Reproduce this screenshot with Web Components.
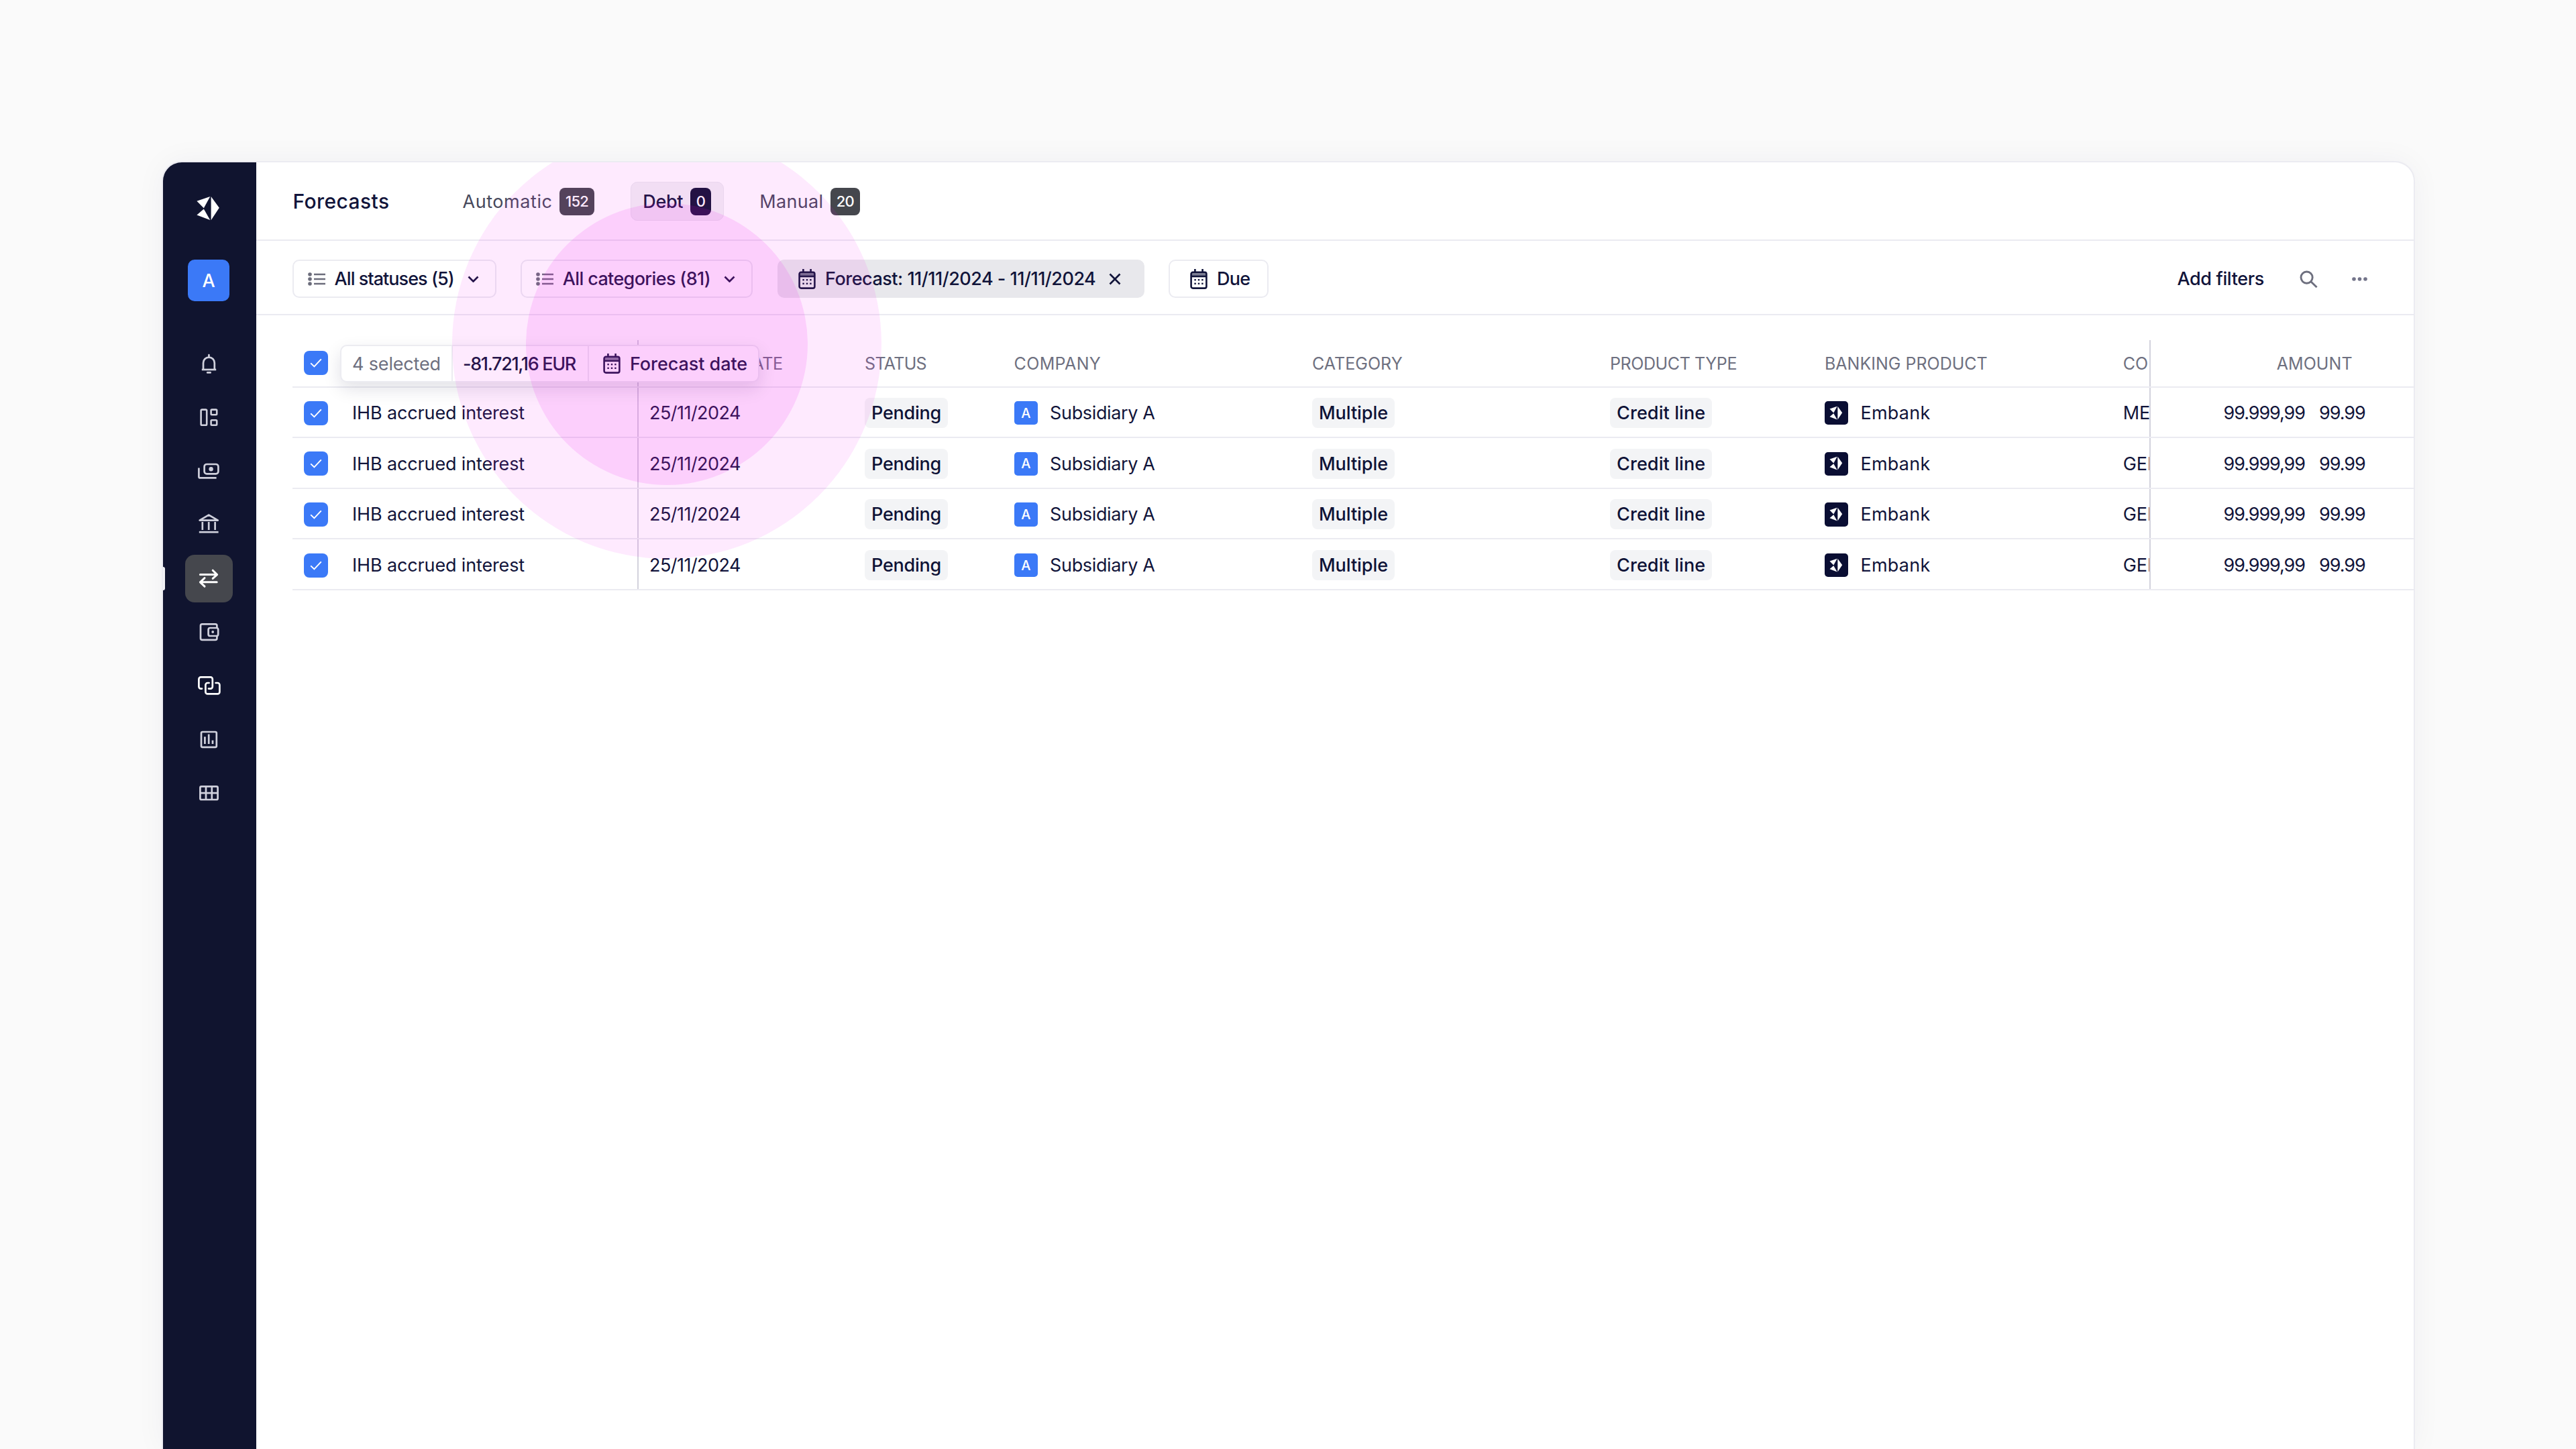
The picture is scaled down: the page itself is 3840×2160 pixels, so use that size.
<!doctype html>
<html lang="en"><head><meta charset="utf-8"><title>Forecasts</title>
<style>
html,body{margin:0;height:100%;background:#fafafa;overflow:hidden}
body{font-family:Inter,"Liberation Sans",sans-serif;color:#11143a;padding:242px 0 0 242.5px;box-sizing:border-box}
</style></head>
<body>
<x-app>
  <x-sidebar slot="side">
    <x-nav icon="bell"></x-nav>
    <x-nav icon="board"></x-nav>
    <x-nav icon="money"></x-nav>
    <x-nav icon="bank"></x-nav>
    <x-nav icon="swap" active></x-nav>
    <x-nav icon="wallet"></x-nav>
    <x-nav icon="layers" bright></x-nav>
    <x-nav icon="chart"></x-nav>
    <x-nav icon="table"></x-nav>
  </x-sidebar>
  <x-topbar slot="main" heading="Forecasts">
    <x-tab count="152" style="--ls:.56px">Automatic</x-tab>
    <x-tab count="0" active style="--ls:-.3px">Debt</x-tab>
    <x-tab count="20" style="--ls:.3px">Manual</x-tab>
  </x-topbar>
  <x-filterbar slot="main">
    <x-filter icon="list" chevron style="--ls:-.95px">All statuses (5)</x-filter>
    <x-filter icon="list" chevron style="--ls:-.64px">All categories (81)</x-filter>
    <x-filter icon="calendar" close filled style="--ls:-.5px">Forecast: 11/11/2024 - 11/11/2024</x-filter>
    <x-filter icon="calendar" style="--ls:-.7px">Due</x-filter>
    <x-tools slot="end"></x-tools>
  </x-filterbar>
  <x-table slot="main"></x-table>
  <x-spotlight slot="over"></x-spotlight>
</x-app>
<script>
const ICONS={
logo:[64,64,`<g fill="currentColor" stroke="none"><path d="M34.6 14 46.8 30.8 34.6 49.2Z"/><path d="M13.4 20.7 33.2 14 23.8 31.2Z"/><path d="M23.8 32.4 33.2 49 13.4 41.6Z"/></g>`],
bell:[64,64,`<g fill="none" stroke="currentColor" stroke-width="2.7" stroke-linecap="round"><path d="M23 40V31a8.4 8.4 0 0 1 16.8 0v9"/><path d="M31.4 19.2v3"/><path d="M20.8 41h21.4" stroke-linecap="butt"/><path d="M29.2 45.4h4.4"/></g>`],
board:[64,64,`<g fill="none" stroke="currentColor" stroke-width="2.6"><rect x="19.6" y="20.6" width="8.6" height="23.2" rx="1.6"/><rect x="34.6" y="20.6" width="8.6" height="7.6" rx="1.2"/><rect x="34.6" y="36.2" width="8.6" height="7.6" rx="1.2"/></g>`],
money:[64,64,`<g fill="none" stroke="currentColor" stroke-width="2.7"><rect x="24.6" y="22" width="20.8" height="14.4" rx="3.6"/><path d="M16.4 27.6V40.4a2 2 0 0 0 2 2H42.6"/></g><circle cx="34.6" cy="29.2" r="3.2" fill="currentColor"/>`],
bank:[64,64,`<g fill="none" stroke="currentColor" stroke-width="2.7"><path d="M17.6 25.6 31.2 17.6 44.8 25.6Z" stroke-linejoin="round"/><path d="M21.8 28V40M31.2 28V40M40.6 28V40"/><path d="M16.8 43.2H45.6"/></g>`],
swap:[64,64,`<g fill="none" stroke="currentColor" stroke-width="3" stroke-linecap="round" stroke-linejoin="round"><path d="M18.4 26.6H43.2M37.2 20.2 43.6 26.6 37.2 32.4"/><path d="M43.2 37.8H18.6M25 31.6 18.4 37.8 25 44.2"/></g>`],
wallet:[64,64,`<g fill="none" stroke="currentColor" stroke-width="2.7"><rect x="19" y="20.3" width="24.4" height="23.6" rx="2.4"/></g><rect x="30.6" y="26" width="14.6" height="12" rx="2.6" fill="#10142f" stroke="currentColor" stroke-width="2.7"/><circle cx="37.2" cy="32" r="1.9" fill="currentColor"/>`],
layers:[64,64,`<g fill="none" stroke="currentColor" stroke-width="2.7" stroke-linecap="round"><path d="M21 36.6h-1.6a3 3 0 0 1-3-3V22.4a3 3 0 0 1 3-3h14.4a3 3 0 0 1 3 3v11.2a3 3 0 0 1-3 3H31"/><path d="M31.6 28h-2.2a3 3 0 0 0-3 3v10.4a3 3 0 0 0 3 3h15a3 3 0 0 0 3-3V31a3 3 0 0 0-3-3h-2.8"/></g>`],
chart:[64,64,`<g fill="none" stroke="currentColor" stroke-width="2.7"><rect x="20" y="21" width="22.8" height="22.8" rx="1.8"/><path d="M25.4 28.2V39M31.2 24.6V39"/></g><path d="M37 33.6V39" stroke="currentColor" stroke-width="2.7"/>`],
table:[64,64,`<g fill="none" stroke="currentColor" stroke-width="2.7"><rect x="18.4" y="22.4" width="26.2" height="19.6" rx="1.8"/><path d="M27 22.4V42M35.8 22.4V42M18.4 32.2H44.6"/></g>`],
list:[26,20,`<g fill="currentColor"><circle cx="3" cy="3" r="2.8"/><circle cx="3" cy="10" r="2.8"/><circle cx="3" cy="17" r="2.8"/></g><path d="M9 3H26M9 10H26M9 17H26" stroke="currentColor" stroke-width="2.6"/>`],
chevron:[17,10,`<path d="M1.5 1.5 8.5 8.5 15.5 1.5" fill="none" stroke="currentColor" stroke-width="2.7"/>`],
close:[18,18,`<path d="M1.5 1.5 16.5 16.5M16.5 1.5 1.5 16.5" fill="none" stroke="currentColor" stroke-width="2.7"/>`],
calendar:[26,30,`<g fill="none" stroke="currentColor" stroke-width="2.6"><rect x="1.6" y="4.8" width="22.8" height="23.8" rx="2.6"/><path d="M7.4 0V4.8M18.6 0V4.8"/><path d="M1.6 11H24.4"/></g><path d="M1.6 5.2H24.4V11H1.6Z" fill="currentColor" opacity=".55"/><g fill="currentColor"><rect x="6.4" y="15" width="2.4" height="2.4"/><rect x="11.8" y="15" width="2.4" height="2.4"/><rect x="17.2" y="15" width="2.4" height="2.4"/><rect x="6.4" y="20.6" width="2.4" height="2.4"/><rect x="11.8" y="20.6" width="2.4" height="2.4"/><rect x="17.2" y="20.6" width="2.4" height="2.4"/></g>`],
search:[27,26,`<g fill="none" stroke="currentColor" stroke-width="2.9"><circle cx="10.6" cy="10.6" r="8.6"/><path d="M16.8 16.8 25.6 25.2"/></g>`],
dots:[23,6,`<g fill="currentColor"><circle cx="3" cy="3" r="2.8"/><circle cx="11.5" cy="3" r="2.8"/><circle cx="20" cy="3" r="2.8"/></g>`],
check:[18,14,`<path d="M1.2 7.4 6.4 12.4 16.8 1.4" fill="none" stroke="currentColor" stroke-width="2"/>`]
};
function define(name,css,render){
  customElements.define(name,class extends HTMLElement{
    connectedCallback(){
      if(this.shadowRoot)return;
      this.attachShadow({mode:'open'}).innerHTML=`<style>${css}</style>`+render(this);
    }
  });
}
define('x-icon',`:host{display:inline-flex;flex:none;line-height:0}svg{display:block}`,el=>{
  const [w,h,body]=ICONS[el.getAttribute('name')];
  const s=+el.getAttribute('scale')||1;
  return `<svg xmlns="http://www.w3.org/2000/svg" width="${w*s}" height="${h*s}" viewBox="0 0 ${w} ${h}">${body}</svg>`;
});
define('x-app',`
  :host{display:flex;position:relative;width:3355.5px;height:1918px;background:#fff;overflow:hidden;border-radius:28px 28px 0 0;box-shadow:0 0 0 2px #ebebf1,0 0 46px rgba(30,30,70,.05)}
  .main{flex:1;min-width:0;display:flex;flex-direction:column}
`,()=>`<slot name="side"></slot><div class="main"><slot name="main"></slot></div><slot name="over"></slot>`);
define('x-sidebar',`
  :host{display:flex;flex:none;flex-direction:column;align-items:center;box-sizing:border-box;width:139.5px;padding-right:2.5px;background:#10142f;color:#cfd0dc;font-family:Inter,"Liberation Sans",sans-serif}
  .logo{margin:37px 0 0 2px;color:#fff;height:64px}
  .org{margin-top:44px;margin-bottom:57.5px;width:62px;height:62px;border-radius:10px;background:#3b79f7;color:#fff;display:flex;align-items:center;justify-content:center;font-size:27px;font-weight:500}
  .nav{display:flex;flex-direction:column;align-items:center;gap:9px}
`,()=>`<div class="logo"><x-icon name="logo"></x-icon></div><div class="org">A</div><div class="nav"><slot></slot></div>`);
define('x-nav',`
  :host{display:flex;position:relative;width:71px;height:71px;align-items:center;justify-content:center;border-radius:14px;color:#cfd0dc}
  :host([active]){background:#45474d;color:#fff}
  :host([bright]){color:#fff}
  :host([active])::before{content:"";position:absolute;left:-33px;top:18px;width:3px;height:35px;background:#f1f1f4;border-radius:0 3px 3px 0}
  x-icon{margin-left:2px}
`,el=>`<x-icon name="${el.getAttribute('icon')}"></x-icon>`);
define('x-topbar',`
  :host{display:flex;flex:none;align-items:center;box-sizing:border-box;height:117px;padding:1.5px 0 0 54.5px;border-bottom:2px solid #ebebf1;font-family:Inter,"Liberation Sans",sans-serif}
  h1{margin:0 90.5px 0 0;width:144px;font-size:30px;font-weight:500;letter-spacing:.41px;color:#11143a;white-space:nowrap}
  .tabs{display:flex;gap:35px;align-items:center}
`,el=>`<h1>${el.getAttribute('heading')}</h1><div class="tabs"><slot></slot></div>`);
define('x-tab',`
  :host{display:inline-flex;align-items:center;gap:10.5px;box-sizing:border-box;height:58px;padding:0 17.5px;border-radius:10px;border:1.5px solid transparent;font-size:27px;color:#47495c;white-space:nowrap}
  :host([active]){background:#f2f2f5;border-color:#e9e9ee;color:#11143a;font-weight:500}
  .t{letter-spacing:var(--ls,0)}
  .c{display:inline-flex;align-items:center;justify-content:center;height:41px;padding:0 9px;border-radius:8px;background:#45474d;color:#fff;font-size:22px;font-weight:500;letter-spacing:-.7px}
  :host([active]) .c{background:#0f1233}
`,el=>`<span class="t"><slot></slot></span><span class="c">${el.getAttribute('count')}</span>`);
define('x-filterbar',`
  :host{display:flex;flex:none;align-items:center;box-sizing:border-box;height:110.5px;padding:4.5px 69px 0 54px;border-bottom:2px solid #ebebf1;font-family:Inter,"Liberation Sans",sans-serif}
  .f{display:flex;align-items:center;gap:36.5px}
  .e{margin-left:auto;display:flex;align-items:center}
`,()=>`<div class="f"><slot></slot></div><div class="e"><slot name="end"></slot></div>`);
define('x-filter',`
  :host{display:inline-flex;align-items:center;box-sizing:border-box;height:57px;padding:0 24px 0 20.6px;border-radius:10px;border:2px solid #ebebf1;background:#fff;font-size:27px;font-weight:500;color:#11143a;white-space:nowrap}
  :host([icon=calendar]){padding-left:29.5px;padding-right:26px}
  :host([filled]){background:#e8e8ec;border-color:#e8e8ec;padding-right:32.6px}
  .i{color:#11143a;margin-right:14px}
  .i.list{color:#6b6c7b}
  .t{letter-spacing:var(--ls,0)}
  .tr{margin-left:20px}
`,el=>{
  const ic=el.getAttribute('icon');
  let tr='';
  if(el.hasAttribute('chevron'))tr='<x-icon class="tr" name="chevron"></x-icon>';
  if(el.hasAttribute('close'))tr='<x-icon class="tr" name="close"></x-icon>';
  return `<x-icon class="i ${ic}" name="${ic}"></x-icon><span class="t"><slot></slot></span>${tr}`;
});
define('x-tools',`
  :host{display:flex;align-items:center;font-size:27px;font-weight:500;color:#11143a}
  span{letter-spacing:-.37px;margin-right:53px;white-space:nowrap}
  .s{color:#6d6f7e;margin-right:51px}
  .d{color:#73748a}
`,()=>`<span>Add filters</span><x-icon class="s" name="search"></x-icon><x-icon class="d" name="dots"></x-icon>`);
define('x-check',`
  :host{display:inline-flex;flex:none;align-items:center;justify-content:center;width:36px;height:36px;border-radius:8px;background:#3b79f7;color:#fff}
`,()=>`<x-icon name="check"></x-icon>`);
define('x-chip',`
  :host{display:inline-flex;align-items:center;height:45px;padding:0 10px;border-radius:8px;background:#f3f4f6;font-size:27px;font-weight:500;color:#0e1236;white-space:nowrap}
`,()=>`<slot></slot>`);
define('x-entity',`
  :host{display:inline-flex;align-items:center;gap:18px;font-size:27px;color:#11143a;white-space:nowrap}
  .a{display:flex;align-items:center;justify-content:center;width:35.5px;height:35.5px;border-radius:5px;color:#fff;font-size:20px;font-weight:500;overflow:hidden;letter-spacing:0}
  .blue{background:#3b79f7}
  .dark{background:#0a0e33}
`,el=>{
  const k=el.getAttribute('kind');
  const inner=k==='dark'?'<x-icon name="logo" scale=".56"></x-icon>':'A';
  return `<span class="a ${k}">${inner}</span><span><slot></slot></span>`;
});
define('x-selection',`
  :host{position:absolute;left:71px;top:7px;box-sizing:border-box;display:flex;width:625px;height:56px;background:#fff;border:2px solid #ececf1;border-radius:10px;box-shadow:0 10px 26px rgba(20,20,60,.12);font-size:27px;color:#11143a;white-space:nowrap;overflow:hidden}
  div{display:flex;align-items:center;box-sizing:border-box;height:100%}
  .a{width:166px;padding-left:16px;border-right:2px solid #ececf1;color:#6e7080;letter-spacing:-.16px}
  .b{width:203px;padding-left:15px;border-right:2px solid #ececf1;font-weight:500;letter-spacing:-1.33px}
  .c{flex:1;padding-left:21px;gap:14px;font-weight:500;letter-spacing:-.07px}
`,()=>`<div class="a">4 selected</div><div class="b">-81.721,16 EUR</div><div class="c"><x-icon name="calendar"></x-icon><span>Forecast date</span></div>`);
const COLS='89px 425px 339px 222.6px 444.4px 444px 320px 444.7px 38.9px 394.1px';
define('x-head',`
  :host{display:grid;grid-template-columns:${COLS};height:70.7px;box-sizing:border-box;border-bottom:2px solid #ebebf1;font-size:25px;color:#6e7080;white-space:nowrap}
  .c{display:flex;align-items:center;min-width:0;overflow:hidden;padding-top:2px}
  .chk{padding:0 0 0 17px}
  .line{border-left:2px solid #d3d2dd}
  .date{padding-left:16px;letter-spacing:-.3px}
  .amt{justify-content:flex-end;padding-right:91px;letter-spacing:.08px}
`,()=>`<div class="c chk"><x-check></x-check></div><div class="c"></div><div class="c line date">FORECAST DATE</div>
  <div class="c" style="letter-spacing:-.66px">STATUS</div><div class="c" style="letter-spacing:.34px">COMPANY</div><div class="c" style="letter-spacing:.05px">CATEGORY</div><div class="c" style="letter-spacing:-.4px">PRODUCT TYPE</div><div class="c">BANKING PRODUCT</div><div class="c">CO</div><div class="c line amt">AMOUNT</div>`);
define('x-row',`
  :host{display:grid;grid-template-columns:${COLS};height:75.6px;box-sizing:border-box;border-bottom:2px solid #ebebf1;font-size:27px;color:#11143a;white-space:nowrap}
  .c{display:flex;align-items:center;min-width:0;overflow:hidden;padding-top:2.5px}
  .chk{padding-left:17px}
  .line{border-left:2px solid #d3d2dd}
  .date{padding-left:16px;letter-spacing:-.53px}
  .amt{justify-content:flex-end;padding-right:72px;gap:21px;letter-spacing:-1.05px}
`,el=>`<div class="c chk"><x-check></x-check></div><div class="c" style="letter-spacing:-.146px">IHB accrued interest</div><div class="c line date">25/11/2024</div>
  <div class="c"><x-chip style="letter-spacing:-.25px">Pending</x-chip></div>
  <div class="c"><x-entity kind="blue" style="letter-spacing:-.36px">Subsidiary A</x-entity></div>
  <div class="c"><x-chip style="letter-spacing:-.05px">Multiple</x-chip></div>
  <div class="c"><x-chip style="letter-spacing:.1px">Credit line</x-chip></div>
  <div class="c"><x-entity kind="dark" style="letter-spacing:.23px">Embank</x-entity></div>
  <div class="c">${el.getAttribute('code')}</div>
  <div class="c line amt"><span>99.999,99</span><span>99.99</span></div>`);
define('x-table',`
  :host{display:block;position:relative;margin:37.5px 0 0 54px;font-family:Inter,"Liberation Sans",sans-serif}
`,()=>`<x-head></x-head><x-row code="ME"></x-row><x-row code="GEN"></x-row><x-row code="GEN"></x-row><x-row code="GEN"></x-row><x-selection></x-selection>`);
define('x-spotlight',`
  :host{position:absolute;inset:0;pointer-events:none;overflow:hidden}
  i{position:absolute;border-radius:50%;display:block}
  .o{left:431.5px;top:-49px;width:640px;height:640px;background:rgba(240,20,240,.09)}
  .n{left:541.5px;top:61px;width:420px;height:420px;background:rgba(240,20,240,.12)}
`,()=>`<i class="o"></i><i class="n"></i>`);
</script>
</body></html>
